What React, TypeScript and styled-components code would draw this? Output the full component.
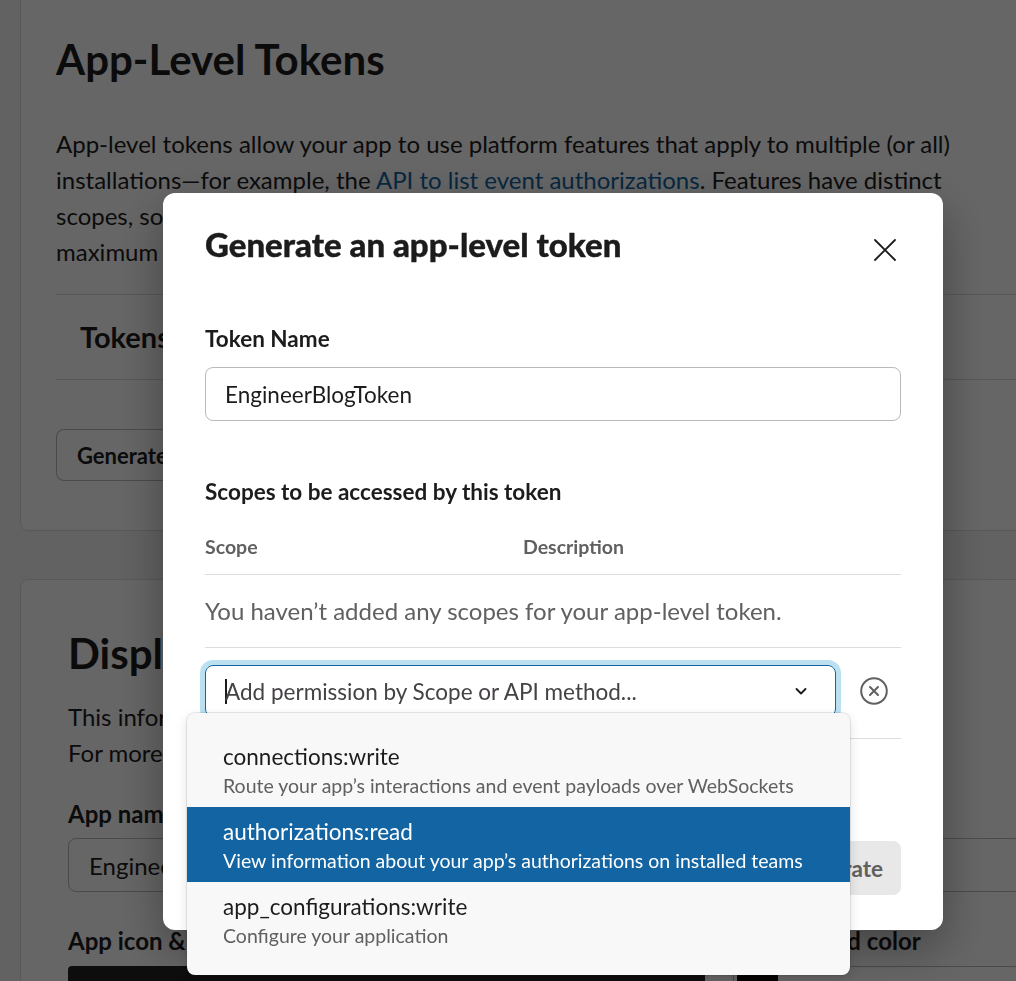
import React from "react";
import styled, { createGlobalStyle } from "styled-components";

const GlobalStyle = createGlobalStyle`
  html, body {
    margin: 0;
    padding: 0;
    overflow: hidden;
  }
  body {
    background: #f5f5f5;
    color: #1d1c1d;
    font-family: Lato, "Noto Sans", sans-serif;
  }
  *, *::before, *::after {
    box-sizing: border-box;
  }
`;

interface ScopeOption {
  name: string;
  description: string;
  active?: boolean;
}

const scopeOptions: ScopeOption[] = [
  {
    name: "connections:write",
    description: "Route your app’s interactions and event payloads over WebSockets",
  },
  {
    name: "authorizations:read",
    description: "View information about your app’s authorizations on installed teams",
    active: true,
  },
  {
    name: "app_configurations:write",
    description: "Configure your application",
  },
];

const CloseIcon = () => (
  <svg width="22" height="22" viewBox="0 0 22 22" fill="none">
    <path d="M1 1l20 20M21 1L1 21" stroke="currentColor" strokeWidth="1.8" strokeLinecap="round" />
  </svg>
);

const ChevronIcon = () => (
  <svg width="16" height="16" viewBox="0 0 16 16" fill="none">
    <path d="M3.5 6l4.5 4.5L12.5 6" stroke="currentColor" strokeWidth="1.9" strokeLinecap="round" strokeLinejoin="round" />
  </svg>
);

const RemoveIcon = () => (
  <svg width="28" height="28" viewBox="0 0 28 28" fill="none">
    <circle cx="14" cy="14" r="12.8" stroke="currentColor" strokeWidth="2" />
    <path d="M10 10l8 8M18 10l-8 8" stroke="currentColor" strokeWidth="2" strokeLinecap="round" />
  </svg>
);

const App = () => {
  return (
    <>
      <GlobalStyle />
      <Page>
        <Card $padding="46px 35px 49px">
          <PageTitle>App-Level Tokens</PageTitle>
          <Lead $gap={42} $maxWidth={910}>
            App-level tokens allow your app to use platform features that apply to multiple (or all)
            installations—for example, the <Link>API to list event authorizations</Link>. Features have
            distinct scopes, so you can create separate tokens, each with its own set of scopes, up to a
            maximum of 25 tokens for every app.
          </Lead>
          <TokensHeader>Tokens</TokensHeader>
          <OutlineButton>Generate Token and Scopes</OutlineButton>
        </Card>

        <Card $padding="48px 47px 40px">
          <PageTitle>Display Information</PageTitle>
          <Lead $gap={21}>
            <LeadLine>This information will be shown in Slack wherever your app appears.</LeadLine>
            <LeadLine>For more ideas, read our guidelines on writing a helpful description.</LeadLine>
          </Lead>
          <FieldLabel $gap={26}>App name</FieldLabel>
          <PageInput>EngineerBlog</PageInput>
          <InfoGrid>
            <div>
              <FieldLabel>App icon &amp; Preview</FieldLabel>
              <IconPreview />
            </div>
            <div>
              <FieldLabel>Background color</FieldLabel>
              <ColorInput>
                <Swatch />
                <ColorValue>#000000</ColorValue>
              </ColorInput>
            </div>
          </InfoGrid>
        </Card>
      </Page>

      <Overlay>
        <Modal>
          <ModalHeader>
            <ModalTitle>Generate an app-level token</ModalTitle>
            <CloseButton aria-label="Close">
              <CloseIcon />
            </CloseButton>
          </ModalHeader>

          <ModalLabel>Token Name</ModalLabel>
          <TextInput>EngineerBlogToken</TextInput>

          <SectionTitle>Scopes to be accessed by this token</SectionTitle>
          <ScopeTable>
            <ScopeHead>
              <ScopeCol>Scope</ScopeCol>
              <span>Description</span>
            </ScopeHead>
            <EmptyRow>You haven’t added any scopes for your app-level token.</EmptyRow>
            <SelectRow>
              <SelectWrap>
                <Select>
                  <Caret />
                  <Placeholder>Add permission by Scope or API method...</Placeholder>
                  <Chevron>
                    <ChevronIcon />
                  </Chevron>
                </Select>
                <Menu>
                  {scopeOptions.map((option) => (
                    <Option key={option.name} $active={option.active}>
                      <OptionName>{option.name}</OptionName>
                      <OptionDescription $active={option.active}>{option.description}</OptionDescription>
                    </Option>
                  ))}
                </Menu>
              </SelectWrap>
              <RemoveButton aria-label="Remove">
                <RemoveIcon />
              </RemoveButton>
            </SelectRow>
          </ScopeTable>

          <ModalFooter>
            <GenerateButton disabled>Generate</GenerateButton>
          </ModalFooter>
        </Modal>
      </Overlay>
    </>
  );
};

const Page = styled.div`
  width: 1070px;
  margin-top: -13px;
  padding-left: 20px;
  display: flex;
  flex-direction: column;
  gap: 48px;
`;

const Card = styled.section<{ $padding: string }>`
  background: #fff;
  border: 1px solid #dddddd;
  border-radius: 8px;
  padding: ${(props) => props.$padding};
`;

const PageTitle = styled.h1`
  margin: 0;
  font-size: 42px;
  line-height: 50px;
  font-weight: 700;
`;

const Lead = styled.p<{ $gap: number; $maxWidth?: number }>`
  margin: ${(props) => props.$gap}px 0 0;
  max-width: ${(props) => (props.$maxWidth ? `${props.$maxWidth}px` : "none")};
  font-size: 24px;
  line-height: 36px;
`;

const LeadLine = styled.span`
  display: block;
`;

const Link = styled.a`
  color: #1264a3;
  text-decoration: none;
`;

const TokensHeader = styled.h2`
  margin: 24px 0 0;
  padding: 25px 24px;
  border-top: 1px solid #dddddd;
  border-bottom: 1px solid #dddddd;
  font-size: 29px;
  line-height: 34px;
  font-weight: 700;
`;

const OutlineButton = styled.button`
  margin-top: 49px;
  height: 52px;
  padding: 0 20px;
  background: #fff;
  border: 1px solid rgba(29, 28, 29, 0.3);
  border-radius: 8px;
  font-family: inherit;
  font-size: 22px;
  font-weight: 700;
  color: #1d1c1d;
`;

const FieldLabel = styled.div<{ $gap?: number }>`
  margin-top: ${(props) => props.$gap ?? 0}px;
  font-size: 24px;
  line-height: 33px;
  font-weight: 700;
`;

const PageInput = styled.div`
  margin-top: 8px;
  height: 54px;
  display: flex;
  align-items: center;
  padding: 0 20px;
  border: 1px solid rgba(29, 28, 29, 0.3);
  border-radius: 8px;
  font-size: 24px;
`;

const InfoGrid = styled.div`
  margin-top: 32px;
  display: grid;
  grid-template-columns: 637px 1fr;
  gap: 28px;

  ${FieldLabel} + * {
    margin-top: 9px;
  }
`;

const IconPreview = styled.div`
  height: 240px;
  background: #222222;
  border-radius: 4px;
`;

const ColorInput = styled.div`
  height: 54px;
  display: flex;
  align-items: stretch;
  padding: 3px;
  border: 1px solid rgba(29, 28, 29, 0.3);
  border-radius: 8px;
`;

const Swatch = styled.span`
  width: 41px;
  background: #000;
  border-radius: 4px 0 0 4px;
`;

const ColorValue = styled.span`
  display: flex;
  align-items: center;
  padding-left: 16px;
  font-size: 24px;
`;

const Overlay = styled.div`
  position: fixed;
  inset: 0;
  background: rgba(0, 0, 0, 0.6);
  padding: 193px 0 0 163px;
`;

const Modal = styled.div`
  width: 780px;
  padding: 31px 42px 35px;
  background: #fff;
  border-radius: 12px;
  box-shadow: 0 18px 48px rgba(0, 0, 0, 0.35);
`;

const ModalHeader = styled.div`
  display: flex;
  justify-content: space-between;
  align-items: flex-start;
`;

const ModalTitle = styled.h2`
  margin: 0;
  font-size: 33px;
  line-height: 40px;
  font-weight: 900;
  -webkit-text-stroke: 0.4px currentColor;
`;

const CloseButton = styled.button`
  width: 28px;
  height: 28px;
  margin: 12px 2px 0 0;
  padding: 0;
  display: flex;
  align-items: center;
  justify-content: center;
  background: none;
  border: none;
  color: #1d1c1d;
`;

const ModalLabel = styled.div`
  margin-top: 60px;
  font-size: 22.5px;
  line-height: 30px;
  font-weight: 700;
`;

const TextInput = styled.div`
  margin-top: 13px;
  height: 54px;
  display: flex;
  align-items: center;
  padding: 0 19px;
  border: 1px solid rgba(29, 28, 29, 0.3);
  border-radius: 8px;
  font-size: 22.5px;
`;

const SectionTitle = styled.div`
  margin-top: 56px;
  font-size: 22.5px;
  line-height: 30px;
  font-weight: 700;
`;

const ScopeTable = styled.div`
  margin-top: 26px;
`;

const ScopeHead = styled.div`
  display: flex;
  padding-bottom: 14px;
  border-bottom: 1px solid #dddddd;
  font-size: 19.5px;
  line-height: 27px;
  font-weight: 700;
  color: #616061;
`;

const ScopeCol = styled.span`
  width: 318px;
`;

const EmptyRow = styled.div`
  padding: 21px 0;
  border-bottom: 1px solid #dddddd;
  font-size: 24px;
  line-height: 30px;
  color: #616061;
`;

const SelectRow = styled.div`
  display: flex;
  align-items: center;
  gap: 24px;
  padding: 17px 0 21px;
  border-bottom: 1px solid #dddddd;
`;

const SelectWrap = styled.div`
  position: relative;
  flex: 1;
`;

const Select = styled.div`
  height: 52px;
  display: flex;
  align-items: center;
  padding: 0 26px 0 19px;
  border: 1px solid #1264a3;
  border-radius: 8px;
  box-shadow: 0 0 0 5px rgba(29, 155, 209, 0.3);
`;

const Caret = styled.span`
  width: 2px;
  height: 25px;
  margin-right: -2px;
  background: #1d1c1d;
`;

const Placeholder = styled.span`
  flex: 1;
  font-size: 22.5px;
  color: #454245;
`;

const Chevron = styled.span`
  display: flex;
  color: #1d1c1d;
`;

const Menu = styled.ul`
  position: absolute;
  top: 48px;
  left: -18px;
  z-index: 2;
  width: 663px;
  margin: 0;
  padding: 19px 0 18px;
  list-style: none;
  background: #f8f8f8;
  border-radius: 8px;
  box-shadow: 0 0 0 1px rgba(29, 28, 29, 0.1), 0 4px 12px rgba(0, 0, 0, 0.12);
`;

const Option = styled.li<{ $active?: boolean }>`
  padding: 10px 36px 7px;
  background: ${(props) => (props.$active ? "#1264a3" : "transparent")};
  color: ${(props) => (props.$active ? "#fff" : "#1d1c1d")};
`;

const OptionName = styled.div`
  font-size: 22.5px;
  line-height: 30px;
`;

const OptionDescription = styled.div<{ $active?: boolean }>`
  font-size: 19.5px;
  line-height: 28px;
  color: ${(props) => (props.$active ? "#fff" : "#616061")};
`;

const RemoveButton = styled.button`
  width: 28px;
  height: 28px;
  margin-right: 13px;
  padding: 0;
  display: flex;
  background: none;
  border: none;
  color: #616061;
`;

const ModalFooter = styled.div`
  margin-top: 102px;
  display: flex;
  justify-content: flex-end;
`;

const GenerateButton = styled.button`
  height: 54px;
  padding: 0 18px;
  background: #e8e8e8;
  border: none;
  border-radius: 8px;
  font-family: inherit;
  font-size: 22.5px;
  font-weight: 700;
  color: #616061;
`;

export default App;
